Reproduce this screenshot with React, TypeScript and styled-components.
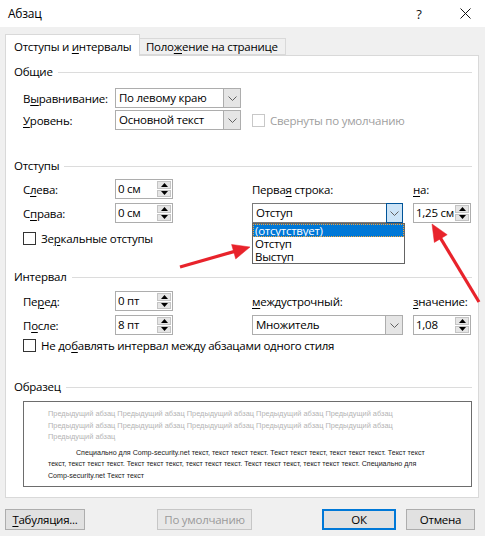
import React from "react";
import styled, { createGlobalStyle } from "styled-components";

const GlobalStyle = createGlobalStyle`
  html, body {
    margin: 0;
    padding: 0;
  }
  body {
    width: 485px;
    height: 536px;
    overflow: hidden;
    background: #f0f0f0;
    font-family: "Open Sans", "Noto Sans", sans-serif;
    font-size: 11.5px;
    letter-spacing: -0.25px;
    color: #000;
  }
  * {
    box-sizing: border-box;
  }
`;

const Dialog = styled.div`
  position: relative;
  width: 485px;
  height: 536px;
  background: #f0f0f0;
  display: flex;
  flex-direction: column;
`;

const TitleBar = styled.div`
  height: 27px;
  background: #fff;
  display: flex;
  align-items: center;
  padding-left: 8px;
`;

const Title = styled.div`
  flex: 1;
  font-size: 12px;
`;

const TitleButton = styled.div<{ $gap?: number }>`
  width: 40px;
  height: 27px;
  display: flex;
  align-items: center;
  justify-content: center;
  margin-right: ${(p) => p.$gap ?? 0}px;
  font-size: 13px;
  color: #111;
`;

const Body = styled.div`
  padding: 7px 6px 0 5px;
  display: flex;
  flex-direction: column;
`;

const TabStrip = styled.div`
  display: flex;
  align-items: flex-end;
  height: 21px;
`;

const Tab = styled.div<{ $active?: boolean }>`
  position: relative;
  z-index: ${(p) => (p.$active ? 1 : 0)};
  height: ${(p) => (p.$active ? 22 : 17)}px;
  margin-bottom: ${(p) => (p.$active ? -1 : 0)}px;
  width: ${(p) => (p.$active ? 135 : 146)}px;
  padding: ${(p) => (p.$active ? "3px 0 0 8px" : "0 0 0 6px")};
  line-height: ${(p) => (p.$active ? 17 : 16)}px;
  background: ${(p) => (p.$active ? "#fff" : "#f0f0f0")};
  border: 1px solid #d9d9d9;
  border-bottom: ${(p) => (p.$active ? "none" : "1px solid #d9d9d9")};
  border-left: ${(p) => (p.$active ? "1px solid #d9d9d9" : "none")};
  white-space: nowrap;
`;

const Panel = styled.div`
  background: #fff;
  border: 1px solid #d9d9d9;
  padding: 8px 6px 10px 8px;
  display: flex;
  flex-direction: column;
`;

const GroupHeader = styled.div<{ $top?: number }>`
  display: flex;
  align-items: center;
  height: 16px;
  line-height: 16px;
  margin-top: ${(p) => p.$top ?? 0}px;
  &::after {
    content: "";
    flex: 1;
    margin-left: 5px;
    border-top: 1px solid #dcdcdc;
  }
`;

const FormGrid = styled.div<{ $columns: string; $top: number; $gap: number }>`
  display: grid;
  grid-template-columns: ${(p) => p.$columns};
  grid-auto-rows: 20px;
  row-gap: ${(p) => p.$gap}px;
  align-items: center;
  padding-left: 9px;
  margin-top: ${(p) => p.$top}px;
`;

const Label = styled.div<{ $muted?: boolean }>`
  white-space: nowrap;
  color: ${(p) => (p.$muted ? "#a0a0a0" : "#000")};
`;

const Key = styled.span`
  text-decoration: underline;
  text-underline-offset: 2px;
`;

const Combo = styled.div<{ $focused?: boolean }>`
  position: relative;
  display: flex;
  height: 20px;
  border: 1px solid ${(p) => (p.$focused ? "#7a7a7a" : "#adadad")};
  background: #fff;
`;

const ComboValue = styled.div`
  flex: 1;
  padding-left: 3px;
  line-height: 18px;
  white-space: nowrap;
`;

const ComboButton = styled.div<{ $focused?: boolean }>`
  width: 17px;
  margin: ${(p) => (p.$focused ? "-1px -1px -1px 0" : "0")};
  height: ${(p) => (p.$focused ? 20 : 18)}px;
  display: flex;
  align-items: center;
  justify-content: center;
  background: ${(p) => (p.$focused ? "#cce4f7" : "#e5e5e5")};
  border: ${(p) => (p.$focused ? "1px solid #005499" : "none")};
  border-left: 1px solid ${(p) => (p.$focused ? "#005499" : "#adadad")};
`;

const DropList = styled.div`
  position: absolute;
  top: 19px;
  left: -1px;
  width: 153px;
  border: 1px solid #646464;
  background: #fff;
  z-index: 5;
`;

const DropItem = styled.div<{ $selected?: boolean }>`
  height: 13px;
  line-height: 13px;
  padding-left: 2px;
  overflow: hidden;
  color: ${(p) => (p.$selected ? "#fff" : "#000")};
  background: ${(p) => (p.$selected ? "#0078d7" : "#fff")};
  outline: ${(p) => (p.$selected ? "1px dotted #f2a33a" : "none")};
  outline-offset: -1px;
  white-space: nowrap;
`;

const Spin = styled.div`
  display: flex;
  height: 20px;
  border: 1px solid #adadad;
  background: #fff;
`;

const SpinValue = styled.div`
  flex: 1;
  padding-left: 2px;
  line-height: 18px;
  white-space: nowrap;
`;

const SpinButtons = styled.div`
  width: 15px;
  display: flex;
  flex-direction: column;
  padding: 1px 1px 1px 0;
  gap: 1px;
`;

const SpinButton = styled.div`
  flex: 1;
  background: #e5e5e5;
  border: 1px solid #c4c4c4;
  display: flex;
  align-items: center;
  justify-content: center;
`;

const CheckRow = styled.label<{ $top?: number; $indent?: number }>`
  display: flex;
  align-items: center;
  gap: 5px;
  height: 16px;
  padding-left: ${(p) => p.$indent ?? 9}px;
  margin-top: ${(p) => p.$top ?? 0}px;
  white-space: nowrap;
`;

const CheckBox = styled.span<{ $disabled?: boolean }>`
  width: 13px;
  height: 13px;
  flex: none;
  border: 1px solid ${(p) => (p.$disabled ? "#c8c8c8" : "#333")};
  background: #fff;
`;

const Sample = styled.div`
  margin: 6px 0 0 9px;
  height: 86px;
  border: 1px solid #6d6d6d;
  padding: 6px 0 0 24px;
  font-family: "Liberation Sans", Arial, sans-serif;
  line-height: 11.5px;
  letter-spacing: 0;
`;

const SampleLine = styled.div<{ $prev?: boolean; $indent?: boolean; $gapTop?: number }>`
  color: ${(p) => (p.$prev ? "#b4b4b4" : "#222")};
  font-size: ${(p) => (p.$prev ? 7.4 : 7.1)}px;
  padding-left: ${(p) => (p.$indent ? 28 : 0)}px;
  margin-top: ${(p) => p.$gapTop ?? 0}px;
  white-space: nowrap;
`;

const ButtonBar = styled.div`
  display: flex;
  justify-content: space-between;
  margin-top: 11px;
  padding-right: 4px;
`;

const ButtonGroup = styled.div<{ $gap: number }>`
  display: flex;
  gap: ${(p) => p.$gap}px;
`;

const Button = styled.div<{ $width: number; $default?: boolean; $disabled?: boolean }>`
  width: ${(p) => p.$width}px;
  height: 21px;
  display: flex;
  align-items: center;
  justify-content: center;
  background: ${(p) => (p.$disabled ? "#e8e8e8" : "#e1e1e1")};
  border: ${(p) => (p.$default ? "2px solid #0078d7" : `1px solid ${p.$disabled ? "#c6c6c6" : "#adadad"}`)};
  color: ${(p) => (p.$disabled ? "#9a9a9a" : "#000")};
  white-space: nowrap;
`;

const Overlay = styled.svg`
  position: absolute;
  left: 0;
  top: 0;
  pointer-events: none;
  z-index: 10;
`;

const Chevron = () => (
  <svg width="9" height="5" viewBox="0 0 9 5">
    <polyline points="0.5,0.5 4.5,4.5 8.5,0.5" fill="none" stroke="#606060" strokeWidth="1" />
  </svg>
);

const Triangle = ({ up }: { up?: boolean }) => (
  <svg width="7" height="4" viewBox="0 0 7 4">
    <polygon points={up ? "3.5,0 7,4 0,4" : "0,0 7,0 3.5,4"} fill="#000" />
  </svg>
);

const ComboBox = ({
  value,
  focused,
  children,
}: {
  value: string;
  focused?: boolean;
  children?: React.ReactNode;
}) => (
  <Combo $focused={focused}>
    <ComboValue>{value}</ComboValue>
    <ComboButton $focused={focused}>
      <Chevron />
    </ComboButton>
    {children}
  </Combo>
);

const SpinBox = ({ value }: { value: string }) => (
  <Spin>
    <SpinValue>{value}</SpinValue>
    <SpinButtons>
      <SpinButton>
        <Triangle up />
      </SpinButton>
      <SpinButton>
        <Triangle />
      </SpinButton>
    </SpinButtons>
  </Spin>
);

const Arrow = ({ from, to }: { from: [number, number]; to: [number, number] }) => {
  const dx = to[0] - from[0];
  const dy = to[1] - from[1];
  const len = Math.hypot(dx, dy);
  const ux = dx / len;
  const uy = dy / len;
  const bx = to[0] - ux * 17;
  const by = to[1] - uy * 17;
  const w = 7.5;
  const head = `${to[0]},${to[1]} ${bx - uy * w},${by + ux * w} ${bx + uy * w},${by - ux * w}`;
  return (
    <g fill="#e8232b" stroke="#e8232b">
      <line x1={from[0]} y1={from[1]} x2={bx + ux * 2} y2={by + uy * 2} strokeWidth="3.2" />
      <polygon points={head} strokeWidth="0.5" />
    </g>
  );
};

const indentColumns = "92px 58px 79px 151px 10px 58px";

export default function App() {
  return (
    <Dialog>
      <GlobalStyle />
      <TitleBar>
        <Title>Абзац</Title>
        <TitleButton $gap={6}>?</TitleButton>
        <TitleButton>
          <svg width="11" height="11" viewBox="0 0 11 11">
            <path d="M0.5 0.5 L10.5 10.5 M10.5 0.5 L0.5 10.5" stroke="#111" strokeWidth="1" />
          </svg>
        </TitleButton>
      </TitleBar>

      <Body>
        <TabStrip>
          <Tab $active>
            Отступы и <Key>и</Key>нтервалы
          </Tab>
          <Tab>
            Поло<Key>ж</Key>ение на странице
          </Tab>
        </TabStrip>

        <Panel>
          <GroupHeader>Общие</GroupHeader>
          <FormGrid $columns="92px 126px 11px 1fr" $top={8} $gap={2}>
            <Label>
              В<Key>ы</Key>равнивание:
            </Label>
            <ComboBox value="По левому краю" />
            <span />
            <span />
            <Label>
              <Key>У</Key>ровень:
            </Label>
            <ComboBox value="Основной текст" />
            <span />
            <CheckRow $indent={0}>
              <CheckBox $disabled />
              <Label $muted>Свернуты по умолчанию</Label>
            </CheckRow>
          </FormGrid>

          <GroupHeader $top={28}>Отступы</GroupHeader>
          <FormGrid $columns={indentColumns} $top={5} $gap={4}>
            <Label>
              С<Key>л</Key>ева:
            </Label>
            <SpinBox value="0 см" />
            <span />
            <Label>
              Перва<Key>я</Key> строка:
            </Label>
            <span />
            <Label>
              <Key>н</Key>а:
            </Label>

            <Label>
              С<Key>п</Key>рава:
            </Label>
            <SpinBox value="0 см" />
            <span />
            <ComboBox value="Отступ" focused>
              <DropList>
                <DropItem $selected>(отсутствует)</DropItem>
                <DropItem>Отступ</DropItem>
                <DropItem>Выступ</DropItem>
              </DropList>
            </ComboBox>
            <span />
            <SpinBox value="1,25 см" />
          </FormGrid>
          <CheckRow $top={7}>
            <CheckBox />
            <span>
              Зе<Key>р</Key>кальные отступы
            </span>
          </CheckRow>

          <GroupHeader $top={23}>Интервал</GroupHeader>
          <FormGrid $columns={indentColumns} $top={6} $gap={4}>
            <Label>
              Пе<Key>р</Key>ед:
            </Label>
            <SpinBox value="0 пт" />
            <span />
            <Label>
              <Key>м</Key>еждустрочный:
            </Label>
            <span />
            <Label>
              <Key>з</Key>начение:
            </Label>

            <Label>
              П<Key>о</Key>сле:
            </Label>
            <SpinBox value="8 пт" />
            <span />
            <ComboBox value="Множитель" />
            <span />
            <SpinBox value="1,08" />
          </FormGrid>
          <CheckRow $top={2}>
            <CheckBox />
            <span>
              Не до<Key>б</Key>авлять интервал между абзацами одного стиля
            </span>
          </CheckRow>

          <GroupHeader $top={26}>Образец</GroupHeader>
          <Sample>
            <SampleLine $prev>
              Предыдущий абзац Предыдущий абзац Предыдущий абзац Предыдущий абзац Предыдущий абзац
            </SampleLine>
            <SampleLine $prev>
              Предыдущий абзац Предыдущий абзац Предыдущий абзац Предыдущий абзац Предыдущий абзац
            </SampleLine>
            <SampleLine $prev>Предыдущий абзац</SampleLine>
            <SampleLine $indent $gapTop={5}>
              Специально для Comp-security.net текст, текст текст текст. Текст текст текст, текст текст
              текст. Текст текст
            </SampleLine>
            <SampleLine>
              текст, текст текст текст. Текст текст текст, текст текст текст. Текст текст текст, текст
              текст текст. Специально для
            </SampleLine>
            <SampleLine>Comp-security.net Текст текст</SampleLine>
          </Sample>
        </Panel>

        <ButtonBar>
          <ButtonGroup $gap={72}>
            <Button $width={80}>
              <span>
                <Key>Т</Key>абуляция...
              </span>
            </Button>
            <Button $width={95} $disabled>
              По умолчанию
            </Button>
          </ButtonGroup>
          <ButtonGroup $gap={10}>
            <Button $width={74} $default>
              ОК
            </Button>
            <Button $width={69}>Отмена</Button>
          </ButtonGroup>
        </ButtonBar>
      </Body>

      <Overlay width="485" height="536" viewBox="0 0 485 536">
        <Arrow from={[180, 267]} to={[250, 247]} />
        <Arrow from={[479, 302]} to={[432, 224]} />
      </Overlay>
    </Dialog>
  );
}
